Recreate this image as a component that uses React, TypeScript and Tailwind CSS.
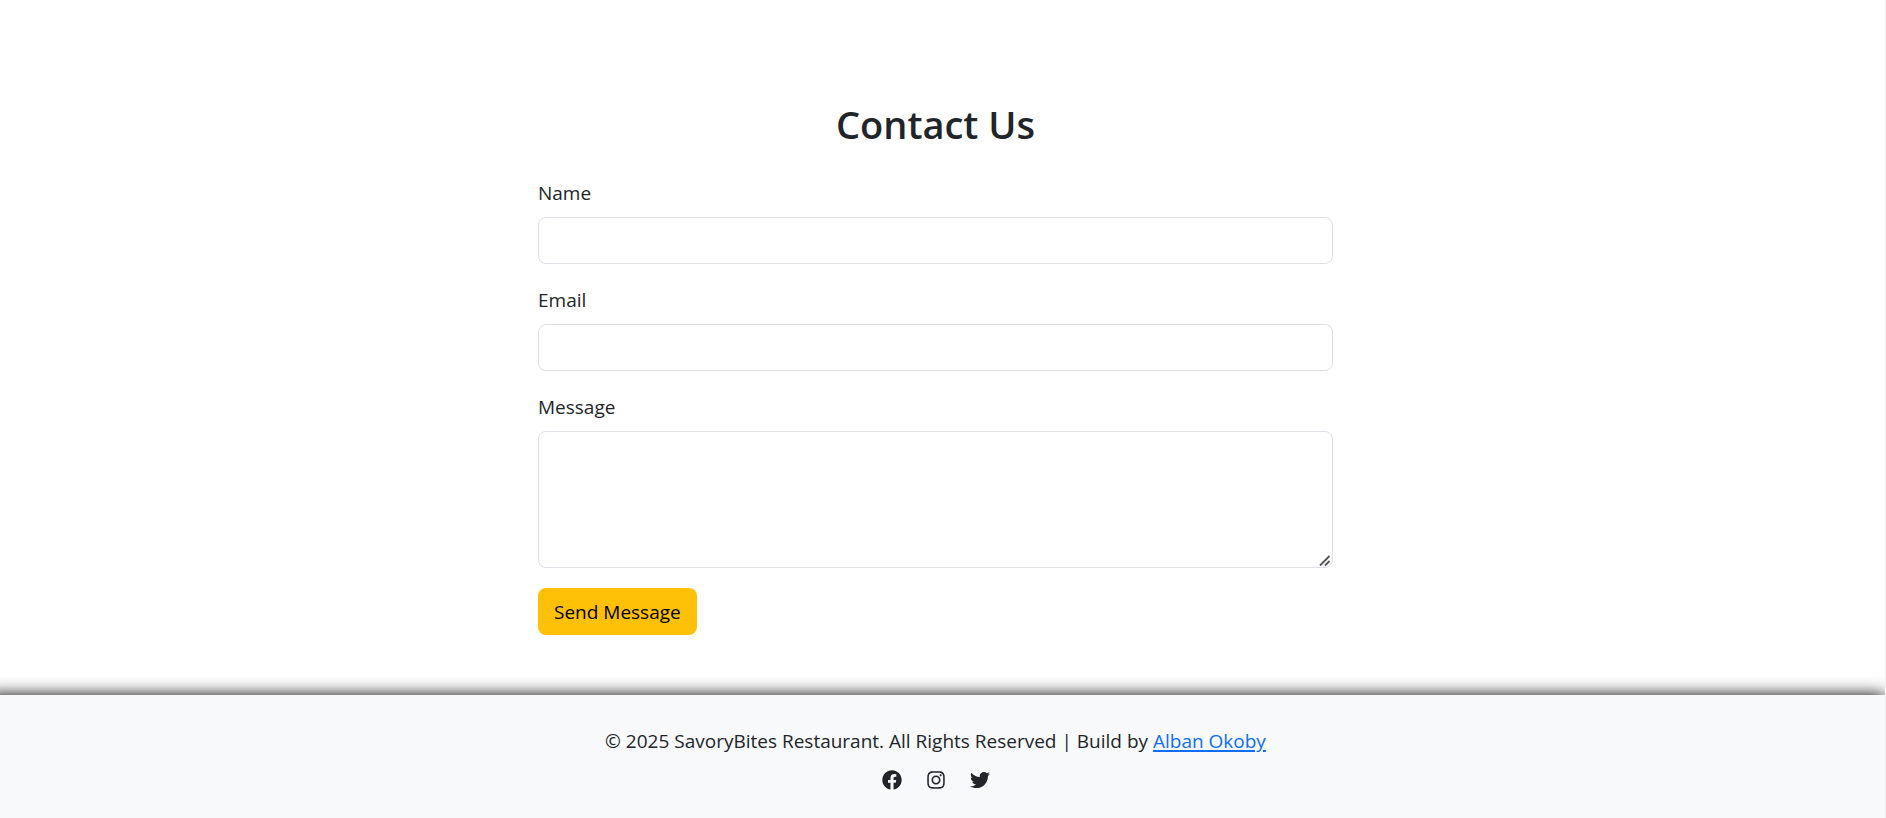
import React from "react";
import { FaFacebook, FaInstagram, FaTwitter } from "react-icons/fa";

const control =
  "block w-full rounded-lg border border-[#dee2e6] bg-white px-4 text-[#212529] outline-none focus:border-[#86b7fe]";

function Field({ id, label, children }: { id: string; label: string; children: React.ReactNode }) {
  return (
    <div className="mb-5">
      <label htmlFor={id} className="mb-2 block">
        {label}
      </label>
      {children}
    </div>
  );
}

const socials = [
  { name: "Facebook", icon: <FaFacebook size={20} /> },
  { name: "Instagram", icon: <FaInstagram size={20} /> },
  { name: "Twitter", icon: <FaTwitter size={20} /> },
];

export default function App() {
  return (
    <div className="overflow-hidden border-r border-[#f0f0f0] bg-white font-['Open_Sans','Noto_Sans',sans-serif] text-[19px] leading-8 text-[#212529]">
      <section className="pt-[100px] pr-[14px] pb-[60px]">
        <div className="mx-auto max-w-[795px]">
          <h2 className="mb-[29px] text-center text-[38px] leading-[48px] font-semibold">Contact Us</h2>
          <form onSubmit={(e) => e.preventDefault()}>
            <Field id="name" label="Name">
              <input id="name" type="text" className={`${control} h-[47px]`} />
            </Field>
            <Field id="email" label="Email">
              <input id="email" type="email" className={`${control} h-[47px]`} />
            </Field>
            <Field id="message" label="Message">
              <div className="relative">
                <textarea id="message" className={`${control} h-[137px] resize-none py-2`} />
                <svg
                  className="pointer-events-none absolute right-[2px] bottom-[1px]"
                  width="12"
                  height="12"
                  viewBox="0 0 12 12"
                  stroke="#555"
                  strokeWidth="1.8"
                  aria-hidden="true"
                >
                  <path d="M1 10.5 L10.5 1 M6 10.5 L10.5 6" />
                </svg>
              </div>
            </Field>
            <button type="submit" className="block h-[47px] rounded-lg bg-[#ffc107] px-4 text-black">
              Send Message
            </button>
          </form>
        </div>
      </section>
      <footer className="-ml-3 bg-[#f8f9fa] pt-[30px] pr-[14px] pb-[23px] pl-3 text-center shadow-[0_0_16px_#000]">
        <p className="mb-2">
          © 2025 SavoryBites Restaurant. All Rights Reserved | Build by{" "}
          <a href="#alban" className="text-[#0d6efd] underline decoration-2 underline-offset-2">
            Alban Okoby
          </a>
        </p>
        <div className="flex h-[30px] items-center justify-center gap-6">
          {socials.map((s) => (
            <a key={s.name} href={`#${s.name.toLowerCase()}`} aria-label={s.name}>
              {s.icon}
            </a>
          ))}
        </div>
      </footer>
    </div>
  );
}
